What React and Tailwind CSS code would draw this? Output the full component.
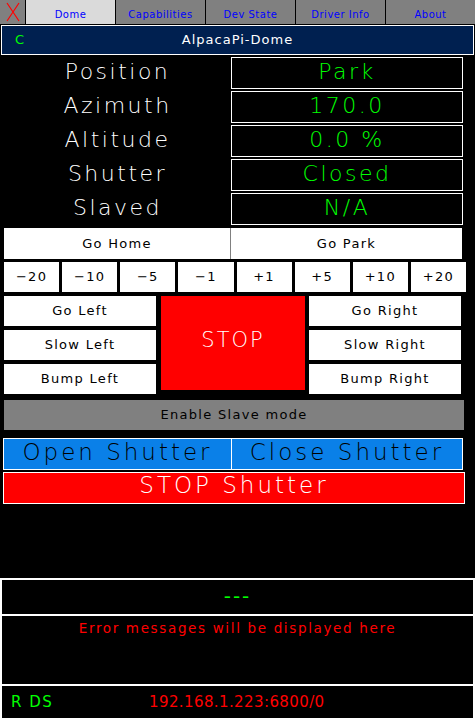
import React from 'react'

const font = { fontFamily: '"DejaVu Sans", "Liberation Sans", sans-serif' }

const tabs = ['Dome', 'Capabilities', 'Dev State', 'Driver Info', 'About']
const rows = [
  ['Position', 'Park'],
  ['Azimuth', '170.0'],
  ['Altitude', '0.0 %'],
  ['Shutter', 'Closed'],
  ['Slaved', 'N/A'],
]
const steps = ['-20', '-10', '-5', '-1', '+1', '+5', '+10', '+20']

function WhiteBtn({ children, className = '' }) {
  return (
    <div className={`bg-white text-black flex items-center justify-center text-[13px] font-normal tracking-[1.3px] ${className}`}>
      {children}
    </div>
  )
}

export default function App() {
  return (
    <div className="w-[475px] h-[720px] bg-black relative overflow-hidden" style={font}>
      {/* Tabs */}
      <div className="flex h-[24px]">
        <div className="w-[25px] bg-[#808080] flex items-center justify-center">
          <svg width="16" height="20" viewBox="0 0 16 20">
            <path d="M2 1 L14 19 M14 1 L2 19" stroke="#ff0000" strokeWidth="1.2" fill="none" />
          </svg>
        </div>
        {tabs.map((t, i) => (
          <div
            key={t}
            className={`w-[90px] border-l border-black flex items-center justify-center text-[10px] tracking-[0.5px] text-[#0000ff] pt-[5px] ${
              i === 0 ? 'bg-[#dadada]' : 'bg-[#808080]'
            }`}
          >
            {t}
          </div>
        ))}
      </div>

      {/* Header */}
      <div className="mt-[1px] ml-[1px] w-[473px] h-[30px] border border-white bg-[#002050] relative flex items-center justify-center">
        <span className="absolute left-[13px] text-[#00ff00] text-[13px]">C</span>
        <span className="text-white text-[13px] tracking-[1px]">AlpacaPi-Dome</span>
      </div>

      {/* Status rows */}
      <div className="mt-[2px] flex flex-col gap-[2px]">
        {rows.map(([label, value]) => (
          <div key={label} className="flex h-[32px]">
            <div className="w-[231px] pl-[4px] pb-[4px] flex items-center justify-center text-white text-[22px] font-extralight tracking-[2.5px]">
              {label}
            </div>
            <div className="w-[232px] border border-white pb-[3px] flex items-center justify-center text-[#00ff00] text-[22px] font-extralight tracking-[2.5px]">
              {value}
            </div>
          </div>
        ))}
      </div>

      {/* Home / Park */}
      <div className="mt-[3px] ml-[4px] w-[458px] h-[31px] flex">
        <WhiteBtn className="w-[227px] border-r border-[#808080]">Go Home</WhiteBtn>
        <WhiteBtn className="flex-1">Go Park</WhiteBtn>
      </div>

      {/* Steps */}
      <div className="mt-[3px] ml-[4px] w-[462px] h-[30px] grid grid-cols-8 gap-[3px]">
        {steps.map((s) => (
          <WhiteBtn key={s}>{s.replace('-', '\u2212')}</WhiteBtn>
        ))}
      </div>

      {/* Movement */}
      <div className="mt-[4px] ml-[4px] flex h-[98px]">
        <div className="w-[152px] flex flex-col gap-[4px]">
          <WhiteBtn className="h-[30px]">Go Left</WhiteBtn>
          <WhiteBtn className="h-[30px]">Slow Left</WhiteBtn>
          <WhiteBtn className="h-[30px]">Bump Left</WhiteBtn>
        </div>
        <div className="ml-[5px] w-[144px] h-[94px] bg-[#ff0000] flex items-center justify-center text-white text-[21px] font-extralight tracking-[2px] pb-[4px]">
          STOP
        </div>
        <div className="ml-[4px] w-[152px] flex flex-col gap-[4px]">
          <WhiteBtn className="h-[30px]">Go Right</WhiteBtn>
          <WhiteBtn className="h-[30px]">Slow Right</WhiteBtn>
          <WhiteBtn className="h-[30px]">Bump Right</WhiteBtn>
        </div>
      </div>

      {/* Slave mode */}
      <div className="mt-[6px] ml-[4px] w-[460px] h-[30px] bg-[#808080] flex items-center justify-center text-black text-[13px] tracking-[1.3px]">
        Enable Slave mode
      </div>

      {/* Shutter */}
      <div className="mt-[8px] ml-[3px] w-[460px] h-[32px] border border-white bg-[#0a80e8] flex">
        <div className="w-[228px] border-r border-white pb-[4px] flex items-center justify-center text-black text-[23px] font-extralight tracking-[3px]">
          Open Shutter
        </div>
        <div className="flex-1 pb-[4px] flex items-center justify-center text-black text-[23px] font-extralight tracking-[3px]">
          Close Shutter
        </div>
      </div>
      <div className="mt-[2px] ml-[3px] w-[462px] h-[32px] border border-white bg-[#ff0000] pb-[5px] flex items-center justify-center text-white text-[23px] font-extralight tracking-[3px]">
        STOP Shutter
      </div>

      {/* Bottom panels */}
      <div className="absolute left-0 top-[578px] w-[475px] flex flex-col">
        <div className="h-[36px] border-2 border-b-0 border-white flex items-center justify-center text-[#00ff00] text-[20px] tracking-[2px] pb-[2px]">
          ---
        </div>
        <div className="h-[70px] border-2 border-b-0 border-white flex justify-center pt-[2px] text-[#ff0000] text-[13.5px] tracking-[1.65px]">
          Error messages will be displayed here
        </div>
        <div className="h-[36px] border-2 border-white relative flex items-center text-[15px] tracking-[0.4px]">
          <span className="absolute left-[9px] text-[#00ff00] tracking-[1.5px]">R DS</span>
          <span className="absolute left-[147px] text-[#ff0000]">192.168.1.223:6800/0</span>
        </div>
      </div>
    </div>
  )
}
